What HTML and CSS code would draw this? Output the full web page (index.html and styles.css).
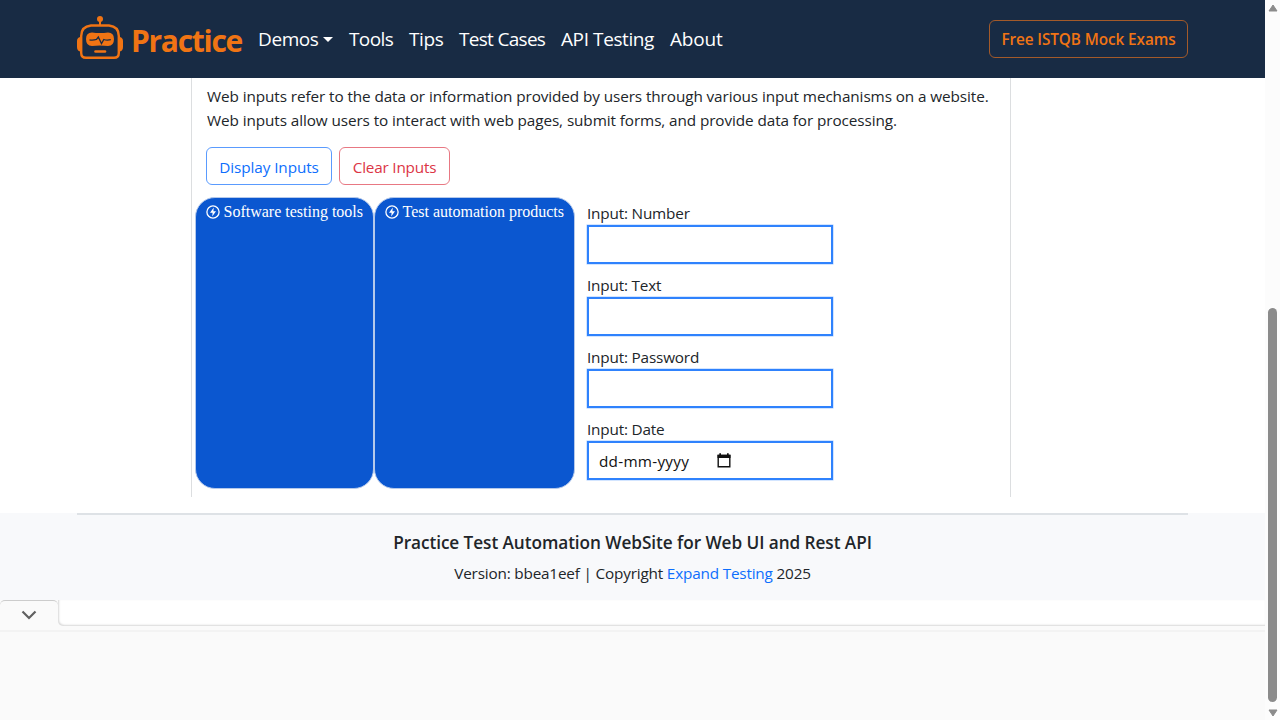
FILE: index.html
```html
<!DOCTYPE html>
<html lang="en">
<head>
<meta charset="utf-8">
<title>Practice - Web inputs</title>
<link rel="stylesheet" href="styles.css">
</head>
<body>
<div class="page">
  <header class="navbar">
    <a class="brand">
      <svg class="robot" width="46" height="44" viewBox="0 0 46 44" fill="none" stroke="#f07414" stroke-width="2.4">
        <circle cx="23" cy="3" r="3" fill="#f07414" stroke="none"/>
        <path d="M23 4v6" stroke-width="2"/>
        <path d="M14 9.500H32Q41.800 10.500 41.800 20V37Q41.800 41.800 37 41.800H9Q4.200 41.800 4.200 37V20Q4.200 10.500 14 9.500Z"/>
        <path d="M3.500 22.500Q1.500 23 1.500 25V31Q1.500 33.500 3.500 34M42.500 22.500Q44.500 23 44.500 25V31Q44.500 33.500 42.500 34" stroke-width="3"/>
        <path d="M15 16.500Q23 17.500 31 16.500Q37 16.500 37 23Q37 30 31 30Q23 29 15 30Q9 30 9 23Q9 16.500 15 16.500Z" fill="#f07414" stroke="none"/>
        <path d="M12.500 23.800q3 .8 7-.4l1.800-2.400 3.200 6.500 2.300-4q3 1 7 .2" stroke="#182b44" stroke-width="1.300"/>
        <path d="M18.500 35.500H28" stroke-width="2.600" stroke-linecap="round"/>
      </svg>
      <span class="brand-name">Practice</span>
    </a>
    <nav class="nav">
      <a class="demos">Demos<i class="caret"></i></a>
      <a class="tools">Tools</a>
      <a class="tips">Tips</a>
      <a class="cases">Test Cases</a>
      <a class="api">API Testing</a>
      <a class="about">About</a>
    </nav>
    <a class="exams"><span>Free ISTQB Mock Exams</span></a>
  </header>

  <main class="panel">
    <p class="intro">Web inputs refer to the data or information provided by users through various input mechanisms on a website.<br>Web inputs allow users to interact with web pages, submit forms, and provide data for processing.</p>
    <div class="buttons">
      <button class="btn primary">Display Inputs</button>
      <button class="btn danger">Clear Inputs</button>
    </div>
    <div class="content">
      <div class="promo first">
        <svg width="14" height="14" viewBox="0 0 14 14"><circle cx="7" cy="7" r="6.100" fill="none" stroke="#fff" stroke-width="1.300"/><path d="M7.800 2.600L4 7.700h2.600l-.4 3.700L10 6.300H7.400z" fill="#fff"/></svg>
        <span>Software testing tools</span>
      </div>
      <div class="promo second">
        <svg width="14" height="14" viewBox="0 0 14 14"><circle cx="7" cy="7" r="6.100" fill="none" stroke="#fff" stroke-width="1.300"/><path d="M7.800 2.600L4 7.700h2.600l-.4 3.700L10 6.300H7.400z" fill="#fff"/></svg>
        <span>Test automation products</span>
      </div>
      <form class="fields">
        <label>Input: Number</label>
        <div class="field"></div>
        <label>Input: Text</label>
        <div class="field"></div>
        <label>Input: Password</label>
        <div class="field"></div>
        <label>Input: Date</label>
        <div class="field date">
          <span>dd-mm-yyyy</span>
          <svg width="14" height="15" viewBox="0 0 14 15"><path d="M1.200 2.500H12.800V13.800H1.200Z" fill="none" stroke="#111" stroke-width="1.400"/><path d="M.5 1.800H13.500V5H.5ZM2.300.3H4V2H2.300ZM10 .3H11.700V2H10Z" fill="#111"/></svg>
        </div>
      </form>
    </div>
  </main>

  <footer class="footer">
    <div class="rule"></div>
    <div class="title">Practice Test Automation WebSite for Web UI and Rest API</div>
    <div class="version">Version: bbea1eef | Copyright <a>Expand Testing</a> 2025</div>
  </footer>

  <section class="ad">
    <div class="ad-top"><div class="tab">
      <svg width="16" height="10" viewBox="0 0 16 10"><path d="M1.500 1.500L8 8L14.500 1.500" fill="none" stroke="#606060" stroke-width="2.200"/></svg>
    </div><div class="ad-gap"></div></div>
    <div class="ad-edge"></div>
  </section>
</div>
<div class="scrollbar">
  <svg width="10" height="8" viewBox="0 0 10 8"><path d="M5 1L9 7H1Z" fill="#8b8b8b" stroke="#8b8b8b" stroke-linejoin="round"/></svg>
  <div class="thumb"></div>
  <svg width="10" height="8" viewBox="0 0 10 8"><path d="M5 7L9 1H1Z" fill="#8b8b8b" stroke="#8b8b8b" stroke-linejoin="round"/></svg>
</div>
</body>
</html>
```
FILE: styles.css
```css
* { box-sizing: border-box; }
body {
  margin: 0;
  display: flex;
  width: 1280px;
  height: 720px;
  overflow: hidden;
  background: #fff;
  color: #212529;
  font: 15.3px/24px "Open Sans", "Noto Sans", sans-serif;
  letter-spacing: -0.18px;
  white-space: nowrap;
}
.page { width: 1265px; height: 720px; display: flex; flex-direction: column; }
.navbar {
  height: 78px;
  flex: none;
  background: #182b44;
  padding: 0 77px;
  display: flex;
  align-items: center;
}
.brand { display: flex; width: 165px; height: 78px; color: #f07414; }
.robot { margin-top: 16px; flex: none; }
.brand-name { margin-left: 8px; font-size: 30px; font-weight: 700; line-height: 81px; letter-spacing: -1.3px; }
.nav { display: flex; gap: 16px; margin-left: 16px; color: #fff; font-size: 19px; line-height: 30px; letter-spacing: -0.4px; }
.demos { width: 75px; display: flex; align-items: center; justify-content: space-between; }
.caret { border: 5.5px solid transparent; border-top-color: #fff; border-bottom: 0; }
.tools { width: 44px; letter-spacing: -0.6px; }
.tips { width: 34px; }
.cases { width: 86px; letter-spacing: -0.7px; }
.api { width: 93px; }
.about { width: 52px; letter-spacing: -0.2px; }
.exams {
  margin-left: auto;
  width: 199px;
  height: 38px;
  border: 1px solid #a35a2a;
  border-radius: 6px;
  color: #f07414;
  font-weight: 600;
  line-height: 37px;
  text-align: center;
  letter-spacing: -0.08px;
}
.panel {
  width: 820px;
  height: 419px;
  flex: none;
  margin-left: 191px;
  border: solid #dcdee0;
  border-width: 0 1px;
  padding-top: 6px;
}
.intro { margin: 0 0 15px 15px; height: 48px; letter-spacing: -0.09px; }
.buttons { display: flex; gap: 7px; margin-left: 14px; }
.btn {
  height: 38px;
  padding: 1px 0 0;
  border: 1px solid;
  border-radius: 6px;
  background: #fff;
  font: inherit;
}
.primary { width: 126px; color: #0d6efd; border-color: #5a9bfe; letter-spacing: -0.08px; }
.danger { width: 111px; color: #dc3545; border-color: #e87883; letter-spacing: -0.2px; }
.content { display: flex; margin: 12px 0 0 3px; }
.promo {
  height: 292px;
  border: 1px solid #b5c9eb;
  border-radius: 20px;
  background: #0b57d0;
  color: #fff;
  font: 16px/18px "Liberation Serif", serif;
  letter-spacing: 0;
  display: flex;
  align-items: flex-start;
  gap: 4px;
  padding: 5px 0 0 10px;
}
.promo svg { margin-top: 2px; flex: none; }
.first { width: 179px; margin-left: -0.5px; }
.second { width: 201.5px; }
.fields { margin: 4px 0 0 12px; width: 246px; }
.fields label { display: block; height: 24px; }
.field { height: 39px; margin-bottom: 9px; border: 2px solid #2f82fd; box-shadow: 0 0 0 0.5px #a6cbfe; }
.date { display: flex; align-items: center; padding-left: 10px; color: #111; }
.date span { width: 118px; padding-top: 1px; letter-spacing: 0.25px; }
.footer { height: 87px; flex: none; margin-top: 16px; background: #f8f9fb; text-align: center; }
.rule { height: 2px; margin: 0 77px; background: #dee2e6; }
.title { margin-top: 16px; font-size: 17.2px; font-weight: 600; letter-spacing: -0.06px; }
.version { margin-top: 6px; }
.version a { color: #0d6efd; }
.ad { height: 120px; background: #fafafa; }
.ad-top { display: flex; height: 26px; background: #fafafa; }
.ad-gap {
  flex: 1;
  background: #fff;
  border-radius: 0 0 0 5px;
  box-shadow: inset 1px -1px 2px #d8d8d8;
}
.tab {
  width: 58px;
  height: 26px;
  padding: 9px 1px 0 0;
  display: flex;
  justify-content: center;
  align-items: flex-start;
  border-top: 1px solid #ccc;
  border-radius: 5px 5px 0 0;
}
.ad-edge { height: 6px; border-bottom: 2px solid #f3f3f3; }
.scrollbar { width: 15px; background: #fcfcfc; display: flex; flex-direction: column; align-items: center; padding: 4px 0 3px; }
.thumb { width: 9px; height: 394px; margin: 296px 0 auto; border-radius: 5px; background: #8b8b8b; }
```
